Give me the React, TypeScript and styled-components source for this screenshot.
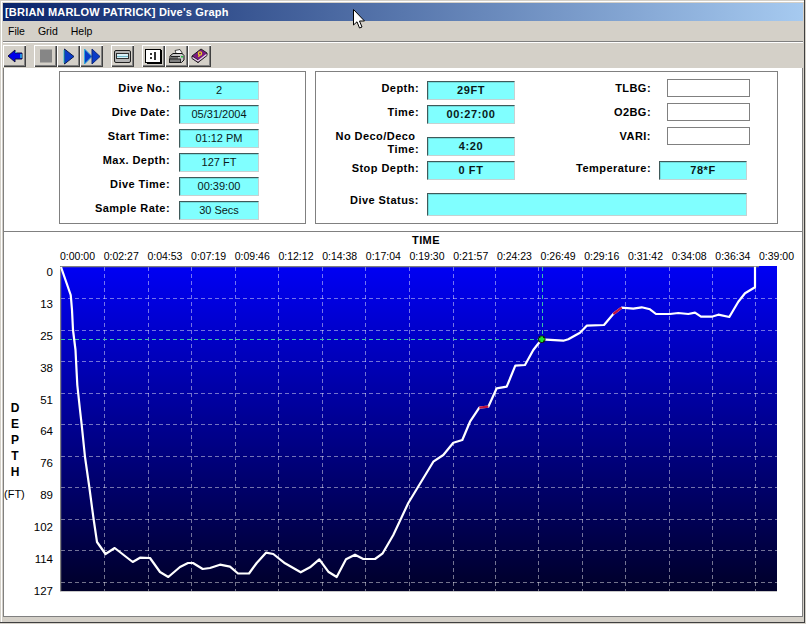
import styled, { createGlobalStyle } from 'styled-components';

const GlobalStyle = createGlobalStyle`
  * {
    box-sizing: border-box;
  }

  html,
  body {
    margin: 0;
    padding: 0;
    background: #d4d0c8;
  }

  body {
    font-family: 'Liberation Sans', Arial, sans-serif;
    font-size: 11px;
    color: #000;
  }
`;

const Window = styled.div`
  position: relative;
  width: 806px;
  height: 624px;
  padding: 3px 3px 0;
  background: #d4d0c8;
  overflow: hidden;
  box-shadow: inset -1px -1px 0 #d4d0c8, inset -2px -2px 0 #404040, inset 1px 1px 0 #d4d0c8, inset 2px 2px 0 #fff;
`;

const TitleBar = styled.div`
  height: 18px;
  padding-left: 2px;
  display: flex;
  align-items: center;
  background: linear-gradient(90deg, #0a246a, #a6caf0);
  color: #fff;
  font-weight: 700;
  letter-spacing: 0.2px;
`;

const MenuBar = styled.div`
  height: 21px;
  padding: 0 0 0 5px;
  display: flex;
  align-items: center;
  gap: 13px;
  border-bottom: 1px solid #808080;
  box-shadow: 0 1px 0 #fff;
`;

const MenuItem = styled.span`
  font-size: 10.5px;
  padding-bottom: 1px;
`;

const Toolbar = styled.div`
  height: 26px;
  padding: 3px 0 0;
  display: flex;
  align-items: flex-start;
`;

const ToolButton = styled.div<{ $gap?: number }>`
  width: 23px;
  height: 22px;
  margin-left: ${({ $gap }) => $gap ?? 0}px;
  display: flex;
  align-items: center;
  justify-content: center;
  background: #d4d0c8;
  box-shadow: inset 1px 1px 0 #fff, inset -1px -1px 0 #404040, inset -2px -2px 0 #808080;
`;

const TopSection = styled.div`
  height: 163px;
  padding: 3px 0 0 55px;
  display: flex;
  gap: 9px;
  background: #fff;
  border-left: 1px solid #808080;
  border-right: 1px solid #808080;
`;

const Panel = styled.div<{ $width: number }>`
  width: ${({ $width }) => $width}px;
  height: 153px;
  border: 1px solid #808080;
`;

const DiveInfo = styled.div`
  padding-top: 9px;
  display: flex;
  flex-direction: column;
  gap: 5px;
`;

const Row = styled.div<{ $labelWidth: number; $gap: number; $top?: number }>`
  display: grid;
  grid-template-columns: ${({ $labelWidth }) => $labelWidth}px auto;
  column-gap: ${({ $gap }) => $gap}px;
  justify-content: start;
  margin-top: ${({ $top }) => $top ?? 0}px;
`;

const Label = styled.div<{ $shift?: number }>`
  font-weight: 700;
  letter-spacing: 0.45px;
  line-height: 13px;
  text-align: right;
  white-space: nowrap;
  margin-top: ${({ $shift }) => $shift ?? 1}px;
`;

const Value = styled.div<{ $width: number; $height?: number; $strong?: boolean }>`
  width: ${({ $width }) => $width}px;
  height: ${({ $height }) => $height ?? 19}px;
  padding-bottom: 1px;
  display: flex;
  align-items: center;
  justify-content: center;
  background: #80ffff;
  border-style: solid;
  border-width: 1px;
  border-color: #3f5a5a #c4d2d2 #c4d2d2 #3f5a5a;
  box-shadow: inset 1px 1px 0 #6fdcdc;
  font-size: 11px;
  font-weight: ${({ $strong }) => ($strong ? 700 : 400)};
  letter-spacing: ${({ $strong }) => ($strong ? '0.6px' : '0')};
  color: #0a1a1a;
`;

const EmptyField = styled.div`
  width: 83px;
  height: 18px;
  background: #fff;
  border: 1px solid #808080;
`;

const StatusColumns = styled.div`
  display: flex;
  height: 111px;
`;

const StatusLeft = styled.div`
  width: 199px;
  padding-top: 9px;
  display: flex;
  flex-direction: column;
  gap: 5px;
`;

const StatusRight = styled.div`
  padding-top: 7px;
  display: flex;
  flex-direction: column;
  gap: 6px;
`;

const StatusBottom = styled.div`
  margin-top: 10px;
`;

const ChartPanel = styled.div`
  height: 386px;
  padding-top: 2px;
  background: #fff;
  border: 1px solid #808080;
`;

const TimeTitle = styled.div`
  padding-left: 46px;
  height: 13px;
  line-height: 13px;
  text-align: center;
  font-weight: 700;
  letter-spacing: 0.4px;
`;

const TimeAxis = styled.div`
  margin: 3px 0 3px 56px;
  height: 13px;
  display: flex;
`;

const TimeTick = styled.div`
  flex: 0 0 43.7px;
  font-size: 10.5px;
  line-height: 13px;
  white-space: nowrap;
`;

const ChartBody = styled.div`
  display: flex;
  align-items: flex-start;
`;

const DepthTitle = styled.div`
  width: 24px;
  padding-top: 134px;
  display: flex;
  flex-direction: column;
  align-items: flex-start;
`;

const DepthLetter = styled.div`
  height: 16px;
  line-height: 16px;
  font-size: 12px;
  font-weight: 700;
  text-align: center;
  width: 22px;
`;

const DepthUnit = styled.div`
  margin-top: 8px;
  line-height: 13px;
`;

const DepthAxis = styled.div`
  width: 25px;
  margin-right: 7px;
  display: flex;
  flex-direction: column;
`;

const DepthTick = styled.div`
  height: 31.9px;
  line-height: 13px;
  font-size: 11.5px;
  text-align: right;
`;

const PlotSvg = styled.svg`
  display: block;
  flex: none;
`;

const Cursor = styled.svg`
  position: absolute;
  left: 353px;
  top: 9px;
`;

const times = [
  '0:00:00', '0:02:27', '0:04:53', '0:07:19', '0:09:46', '0:12:12', '0:14:38', '0:17:04', '0:19:30',
  '0:21:57', '0:24:23', '0:26:49', '0:29:16', '0:31:42', '0:34:08', '0:36:34', '0:39:00',
];
const depths = ['0', '13', '25', '38', '51', '64', '76', '89', '102', '114', '127'];
const gridX = [104, 148, 191, 235, 278, 322, 365, 409, 453, 495, 538, 582, 625, 669, 712, 755];
const gridY = [298, 330, 361, 393, 424, 456, 487, 519, 550, 582];

const profile =
  '61,267 70.7,295 71,298 72,310 73,330 75.5,350 76,360 77.3,385 80,410 81.7,425 85,457 89.3,487 93.3,517 97,542 ' +
  '105.5,554 114.7,548 132.7,562 140,557.7 150,558 160,572 168.3,577 180,567 188,563 193,563 202.7,569 210,568 ' +
  '220,564.7 230,566.7 238,573.5 249,573.5 256.7,563 266,552.7 273.3,554 285,563.3 300.7,572.3 310,567.3 ' +
  '319.3,559.3 328.3,571.7 336.7,577 346,559.3 355,554.7 363.3,559 375,559 382.7,553.3 393.3,535 408.3,503 ' +
  '433.3,461.7 443.3,455 453.3,442.7 462.3,440 470,421.7 479.3,407.7 488.3,406.7 496.7,388.3 506.7,386.7 ' +
  '515.3,365.7 525,365 533.3,350 541.7,339.3 563.3,340.7 568.3,339.3 580,332.7 586.7,325.7 604,325 613.3,314 ' +
  '621.7,307.7 633.3,308.7 641.7,307.3 650,309.3 656,314 670,314 678.3,313 688.3,314 695,312.7 701,316.7 ' +
  '711.7,316.7 718.3,314.7 729.3,317 738.3,301.7 745,293.3 755,287.3 755,266.7';

const BackIcon = () => (
  <svg width="16" height="16" viewBox="0 0 16 16">
    <polygon points="1,8 8,2 8,5 15,5 15,11 8,11 8,14" fill="#0000e8" stroke="#101040" />
    <path d="M14 6v4M9 4v1" stroke="#30c8e8" strokeWidth="1.4" />
  </svg>
);

const StopIcon = () => (
  <svg width="14" height="14" viewBox="0 0 14 14">
    <rect x="1" y="0.5" width="12" height="13" fill="#868686" />
  </svg>
);

const PlayIcon = () => (
  <svg width="12" height="17" viewBox="0 0 12 17">
    <polygon points="1.5,1 11,8.5 1.5,16" fill="#0a3cc8" stroke="#102050" />
    <path d="M1 2v13" stroke="#30c0d8" />
  </svg>
);

const FastForwardIcon = () => (
  <svg width="18" height="17" viewBox="0 0 18 17">
    <polygon points="1.5,1 9,8.5 1.5,16" fill="#0a3cc8" stroke="#30a8d8" />
    <polygon points="9,1 17,8.5 9,16" fill="#0a3cc8" stroke="#102878" />
  </svg>
);

const PanelIcon = () => (
  <svg width="17" height="13" viewBox="0 0 17 13">
    <rect x="0.5" y="0.5" width="16" height="12" rx="1.5" fill="#b4b4b4" stroke="#202020" />
    <rect x="2.5" y="3.5" width="12" height="5" fill="#d8f0f8" stroke="#303030" />
    <path d="M3 6.5h11" stroke="#70b8c8" />
  </svg>
);

const ListIcon = () => (
  <svg width="17" height="15" viewBox="0 0 17 15">
    <rect x="0.5" y="0.5" width="15" height="13" fill="#fff" stroke="#000" />
    <path d="M16 1v14H2" stroke="#000" strokeWidth="2" fill="none" />
    <path d="M6 4v2M6 8v2M10 3v8" stroke="#000" strokeWidth="1.6" />
  </svg>
);

const PrinterIcon = () => (
  <svg width="17" height="15" viewBox="0 0 17 15">
    <path d="M7 1.5l5-1 2.5 4-6 1z" fill="#fff" stroke="#202020" strokeWidth="0.8" />
    <path d="M2 7l3-2.5h9l2 2V11l-2.5 2.5H2z" fill="#c8c8c8" stroke="#101010" />
    <rect x="1.5" y="10" width="11" height="3.5" fill="#808080" stroke="#101010" strokeWidth="0.8" />
    <path d="M3 7.5h9M3 9h7" stroke="#202020" />
    <rect x="13" y="7" width="2" height="1.5" fill="#20c040" />
  </svg>
);

const BookIcon = () => (
  <svg width="17" height="16" viewBox="0 0 17 16">
    <path d="M1 8l9-7 6 4v2.5l-9 7-6-4z" fill="#7a1a80" stroke="#202020" />
    <path d="M1 8l6 4v3" fill="none" stroke="#202020" />
    <path d="M1.5 9.5l5.5 3.5 8.5-6.5" fill="none" stroke="#e8d8e8" strokeWidth="1.3" />
    <circle cx="9" cy="5.5" r="1.6" fill="none" stroke="#f0d020" strokeWidth="1.2" />
    <path d="M8.5 7l-1 2" stroke="#f0d020" strokeWidth="1.2" />
  </svg>
);

const Plot = () => (
  <PlotSvg width="717" height="326" viewBox="60 266 717 326">
    <defs>
      <linearGradient id="water" x1="0" y1="0" x2="0" y2="1">
        <stop offset="0" stopColor="#0000f4" />
        <stop offset="1" stopColor="#000028" />
      </linearGradient>
    </defs>
    <rect x="60" y="266" width="717" height="326" fill="url(#water)" />
    <g stroke="#fff" strokeOpacity="0.45" strokeDasharray="4 3" shapeRendering="crispEdges">
      {gridY.map((y) => (
        <line key={y} x1="61" x2="777" y1={y + 0.5} y2={y + 0.5} />
      ))}
      {gridX.map((x) => (
        <line key={x} x1={x + 0.5} x2={x + 0.5} y1="267" y2="592" />
      ))}
    </g>
    <g stroke="#3fc0a8" strokeDasharray="4 3" shapeRendering="crispEdges">
      <line x1="61" x2="540" y1="339.5" y2="339.5" />
      <line x1="542.5" x2="542.5" y1="267" y2="337" />
    </g>
    <path d="M60 266.5H759M60.5 266V592" stroke="#808080" fill="none" strokeWidth="1.5" />
    <path d="M60 591.5H777" stroke="#c8c8c8" />
    <polyline points={profile} fill="none" stroke="#fff" strokeWidth="2.2" strokeLinejoin="round" />
    <path d="M479.3 407.7L488.3 406.7M613.3 314L621.7 307.7" stroke="#c01040" strokeWidth="2.2" />
    <circle cx="541.7" cy="339.3" r="3.8" fill="#102010" />
    <path d="M538.9 339.3h5.6M541.7 336.6v5.4" stroke="#20e030" strokeWidth="2.6" />
  </PlotSvg>
);

const App = () => {
  return (
    <Window>
      <GlobalStyle />
      <TitleBar>[BRIAN MARLOW PATRICK] Dive's Graph</TitleBar>
      <MenuBar>
        <MenuItem>File</MenuItem>
        <MenuItem>Grid</MenuItem>
        <MenuItem>Help</MenuItem>
      </MenuBar>
      <Toolbar>
        <ToolButton>
          <BackIcon />
        </ToolButton>
        <ToolButton $gap={8}>
          <StopIcon />
        </ToolButton>
        <ToolButton>
          <PlayIcon />
        </ToolButton>
        <ToolButton>
          <FastForwardIcon />
        </ToolButton>
        <ToolButton $gap={8}>
          <PanelIcon />
        </ToolButton>
        <ToolButton $gap={8}>
          <ListIcon />
        </ToolButton>
        <ToolButton>
          <PrinterIcon />
        </ToolButton>
        <ToolButton>
          <BookIcon />
        </ToolButton>
      </Toolbar>
      <TopSection>
        <Panel $width={247}>
          <DiveInfo>
            {[
              ['Dive No.:', '2'],
              ['Dive Date:', '05/31/2004'],
              ['Start Time:', '01:12 PM'],
              ['Max. Depth:', '127 FT'],
              ['Dive Time:', '00:39:00'],
              ['Sample Rate:', '30 Secs'],
            ].map(([label, value]) => (
              <Row key={label} $labelWidth={110} $gap={9}>
                <Label>{label}</Label>
                <Value $width={80}>{value}</Value>
              </Row>
            ))}
          </DiveInfo>
        </Panel>
        <Panel $width={463}>
          <StatusColumns>
            <StatusLeft>
              <Row $labelWidth={103} $gap={8}>
                <Label>Depth:</Label>
                <Value $width={88} $strong>29FT</Value>
              </Row>
              <Row $labelWidth={103} $gap={8}>
                <Label>Time:</Label>
                <Value $width={88} $strong>00:27:00</Value>
              </Row>
              <Row $labelWidth={103} $gap={8} $top={8}>
                <Label $shift={-7}>
                  No Deco/Deco&nbsp;
                  <br />
                  Time:
                </Label>
                <Value $width={88} $strong>4:20</Value>
              </Row>
              <Row $labelWidth={103} $gap={8}>
                <Label>Stop Depth:</Label>
                <Value $width={88} $strong>0 FT</Value>
              </Row>
            </StatusLeft>
            <StatusRight>
              <Row $labelWidth={136} $gap={16}>
                <Label $shift={3}>TLBG:</Label>
                <EmptyField />
              </Row>
              <Row $labelWidth={136} $gap={16}>
                <Label $shift={3}>O2BG:</Label>
                <EmptyField />
              </Row>
              <Row $labelWidth={136} $gap={16}>
                <Label $shift={3}>VARI:</Label>
                <EmptyField />
              </Row>
              <Row $labelWidth={136} $gap={8} $top={10}>
                <Label>Temperature:</Label>
                <Value $width={88} $strong>78*F</Value>
              </Row>
            </StatusRight>
          </StatusColumns>
          <StatusBottom>
            <Row $labelWidth={103} $gap={8}>
              <Label>Dive Status:</Label>
              <Value $width={320} $height={23} />
            </Row>
          </StatusBottom>
        </Panel>
      </TopSection>
      <ChartPanel>
        <TimeTitle>TIME</TimeTitle>
        <TimeAxis>
          {times.map((time) => (
            <TimeTick key={time}>{time}</TimeTick>
          ))}
        </TimeAxis>
        <ChartBody>
          <DepthTitle>
            {'DEPTH'.split('').map((letter) => (
              <DepthLetter key={letter}>{letter}</DepthLetter>
            ))}
            <DepthUnit>(FT)</DepthUnit>
          </DepthTitle>
          <DepthAxis>
            {depths.map((depth) => (
              <DepthTick key={depth}>{depth}</DepthTick>
            ))}
          </DepthAxis>
          <Plot />
        </ChartBody>
      </ChartPanel>
      <Cursor width="13" height="21" viewBox="0 0 13 21">
        <polygon points="0.5,0.5 0.5,16 4,12.8 6.5,19 9,18 6.5,12 11.5,12" fill="#fff" stroke="#000" />
      </Cursor>
    </Window>
  );
};

export default App;
